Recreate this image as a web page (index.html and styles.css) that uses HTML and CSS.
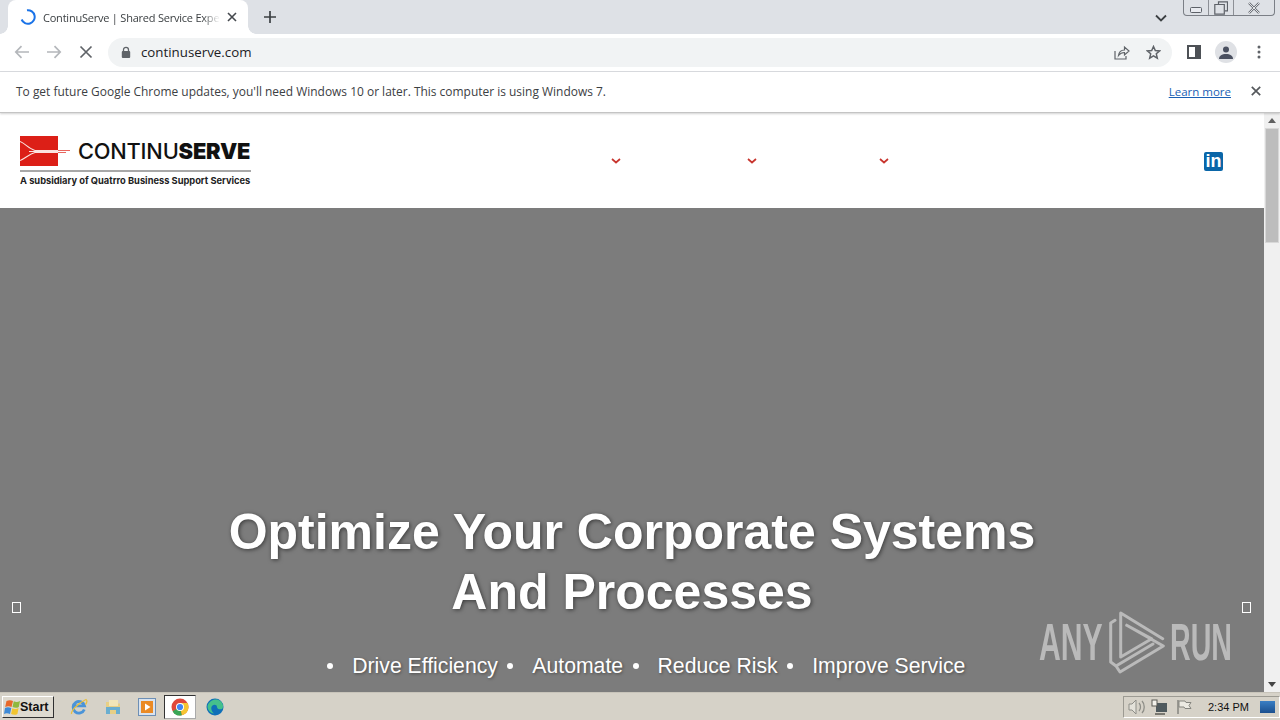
FILE: index.html
```html
<!DOCTYPE html>
<html lang="en">
<head>
<meta charset="utf-8">
<title>ContinuServe | Shared Service Experts</title>
<link rel="stylesheet" href="styles.css">
</head>
<body>
<div class="tabstrip">
  <div class="tab">
    <svg class="spinner" width="16" height="16" viewBox="0 0 16 16"><path d="M7 1.200A6.800 6.800 0 1 1 1.600 10.500" fill="none" stroke="#1a73e8" stroke-width="2"/></svg>
    <span class="tab-title">ContinuServe | Shared Service Expe</span>
    <svg class="tab-close" width="10" height="10" viewBox="0 0 10 10"><path d="M1 1l8 8M9 1l-8 8" stroke="#45494e" stroke-width="1.600"/></svg>
  </div>
  <svg class="newtab" width="12" height="12" viewBox="0 0 12 12"><path d="M6 0v12M0 6h12" stroke="#3c4043" stroke-width="1.700"/></svg>
  <div class="strip-spacer"></div>
  <svg class="tabs-menu" width="12" height="8" viewBox="0 0 12 8"><path d="M1 1.500l5 5 5-5" fill="none" stroke="#3c4043" stroke-width="1.800"/></svg>
  <div class="winctl">
    <div class="wc wc-min"><svg width="12" height="6" viewBox="0 0 12 6"><rect x=".5" y=".5" width="11" height="5" rx="1" fill="#e8eaef" stroke="#5d6168"/></svg></div>
    <div class="wc wc-max"><svg width="14" height="14" viewBox="0 0 14 14"><path d="M4.500 3V.8h9v9H11M.8 3.500h9.500v9.700H.8z" fill="none" stroke="#5d6168" stroke-width="1.200"/></svg></div>
    <div class="wc wc-close"><svg width="14" height="12" viewBox="0 0 14 12"><path d="M2 1l10 10M12 1L2 11" stroke="#6a6e74" stroke-width="2.400"/><path d="M2 1l10 10M12 1L2 11" stroke="#eef0f3" stroke-width=".9"/></svg></div>
  </div>
</div>

<div class="toolbar">
  <svg class="nav nav-back" width="16" height="14" viewBox="0 0 16 14"><path d="M15 7H2M7.500 1.200L1.800 7l5.700 5.800" fill="none" stroke="#b4b7bb" stroke-width="1.700"/></svg>
  <svg class="nav nav-fwd" width="16" height="14" viewBox="0 0 16 14"><path d="M1 7h13M8.500 1.200L14.200 7l-5.700 5.800" fill="none" stroke="#b4b7bb" stroke-width="1.700"/></svg>
  <svg class="nav nav-stop" width="14" height="14" viewBox="0 0 14 14"><path d="M1.500 1.500l11 11M12.500 1.500l-11 11" stroke="#5f6368" stroke-width="1.700"/></svg>
  <div class="omnibox">
    <svg width="10" height="13" viewBox="0 0 10 13"><path d="M2.500 5.500V3.800a2.500 2.500 0 0 1 5 0v1.700" fill="none" stroke="#5f6368" stroke-width="1.300"/><rect x=".8" y="5" width="8.400" height="7" rx="1" fill="#5f6368"/></svg>
    <span class="url">continuserve.com</span>
    <div class="strip-spacer"></div>
    <svg class="omni-share" width="16" height="15" viewBox="0 0 16 15"><path d="M1 6v8h11v-3" fill="none" stroke="#5f6368" stroke-width="1.200"/><path d="M4.500 10.500C5 6.800 7.500 5 10.500 5V2l4.500 4-4.500 4V7.500c-2.500 0-4.500 1-6 3z" fill="none" stroke="#5f6368" stroke-width="1.200"/></svg>
    <svg class="omni-star" width="15" height="15" viewBox="0 0 15 15"><path d="M7.500 1.500l1.800 4 4.300.4-3.300 2.900 1 4.300-3.800-2.300-3.800 2.300 1-4.300L1.400 5.900l4.300-.4z" fill="none" stroke="#5f6368" stroke-width="1.500"/></svg>
  </div>
  <svg class="side-icon" width="14" height="14" viewBox="0 0 14 14"><rect x="1" y="1" width="12" height="12" fill="none" stroke="#4d5156" stroke-width="2"/><rect x="8" y="1" width="5" height="12" fill="#4d5156"/></svg>
  <div class="avatar"><svg width="14" height="13" viewBox="0 0 14 13"><circle cx="7" cy="3.500" r="3" fill="#4a5060"/><path d="M0 13c0-3.500 3-5 7-5s7 1.500 7 5z" fill="#4a5060"/></svg></div>
  <svg class="menu-dots" width="4" height="14" viewBox="0 0 4 14"><circle cx="2" cy="2" r="1.500" fill="#5f6368"/><circle cx="2" cy="7" r="1.500" fill="#5f6368"/><circle cx="2" cy="12" r="1.500" fill="#5f6368"/></svg>
</div>

<div class="infobar">
  <span class="info-text">To get future Google Chrome updates, you'll need Windows 10 or later. This computer is using Windows 7.</span>
  <a class="learn" href="#">Learn more</a>
  <svg class="info-close" width="10" height="10" viewBox="0 0 10 10"><path d="M.8.800l8.400 8.400M9.200.800L.8 9.200" stroke="#55585c" stroke-width="1.700"/></svg>
</div>

<div class="viewport">
  <main class="page">
    <header class="site-header">
      <div class="logo">
        <div class="logo-top">
          <svg width="50" height="30" viewBox="0 0 50 30"><rect width="38" height="30" fill="#dc1f17"/><path d="M38 14.500h12M38 16.500h8" stroke="#e8675f" stroke-width="1"/><path d="M0 5.500C6 8 9 13 15 14.500h23M0 24.500C6 22 9 18 15 16.500h23M9 15.500h29" fill="none" stroke="#fbe3df" stroke-width="1.100"/></svg>
          <span class="logo-name">CONTINU<b>SERVE</b></span>
        </div>
        <div class="logo-sub">A subsidiary of Quatrro Business Support Services</div>
      </div>
      <nav class="site-nav">
        <svg class="chev c1" width="10" height="6" viewBox="0 0 10 6"><path d="M1 1l4 3.500L9 1" fill="none" stroke="#c8352e" stroke-width="1.700"/></svg>
        <svg class="chev c2" width="10" height="6" viewBox="0 0 10 6"><path d="M1 1l4 3.500L9 1" fill="none" stroke="#c8352e" stroke-width="1.700"/></svg>
        <svg class="chev c3" width="10" height="6" viewBox="0 0 10 6"><path d="M1 1l4 3.500L9 1" fill="none" stroke="#c8352e" stroke-width="1.700"/></svg>
      </nav>
      <div class="linkedin"><span>in</span></div>
    </header>
    <section class="hero">
      <h1>Optimize Your Corporate Systems<br>And Processes</h1>
      <ul class="points">
        <li>Drive Efficiency</li>
        <li>Automate</li>
        <li>Reduce Risk</li>
        <li>Improve Service</li>
      </ul>
      <span class="car car-l"></span>
      <span class="car car-r"></span>
      <div class="watermark">
        <span class="wm-text wm-any">ANY</span>
        <svg class="wm-logo" width="58" height="64" viewBox="0 0 58 64"><path d="M12.700 47V3l42 25.700M12.700 47l31-18.300-25-13.400M18.700 15.300L55.300 36 12 62l-4-6 37-22M7 10.300L2.700 13v39L8 56" fill="none" stroke="#bababa" stroke-width="3" stroke-linejoin="round" stroke-linecap="round"/></svg>
        <span class="wm-text wm-run">RUN</span>
      </div>
    </section>
  </main>
  <div class="scrollbar">
    <div class="sb-btn"><span class="tri-up"></span></div>
    <div class="sb-thumb"></div>
    <div class="strip-spacer"></div>
    <div class="sb-btn"><span class="tri-down"></span></div>
  </div>
</div>

<footer class="taskbar">
  <div class="start">
    <svg width="17" height="16" viewBox="0 0 17 16"><path d="M2.500 2C5 .8 7 1 9 2L7.500 8C5.500 7 3.500 7 1.200 8z" fill="#e8682a"/><path d="M9.800 2.300c2 1 4 1 6.200-.2L14.800 8c-2 1.200-4.200 1-6.300 0z" fill="#8fb83e"/><path d="M1 9c2-1.200 4.200-1 6.300 0L6 15c-2-1-4-1.200-6 0z" fill="#3f8ad6"/><path d="M8.300 9.300c2 1 4.200 1 6.300-.2L13.400 15c-2 1.200-4.300 1-6.300 0z" fill="#f2c530"/></svg>
    <span class="start-label">Start</span>
  </div>
  <div class="quick">
    <svg class="ql" width="18" height="18" viewBox="0 0 18 18"><path d="M14.300 11.500A5.800 5.800 0 1 1 14.500 7.800H4" fill="none" stroke="#4b94d8" stroke-width="2.800"/><path d="M1.500 16C1 14 6 6 16 1.500c1.500 1 1 3-.5 5" fill="none" stroke="#e9bf3d" stroke-width="1.300"/></svg>
    <svg class="ql" width="18" height="18" viewBox="0 0 18 18"><path d="M2 4h5l1 1.500h8V16H2z" fill="#e7cf86"/><rect x="5" y="2" width="9" height="6" fill="#f2e6b8"/><path d="M2 9h14v7h-4v-4H6v4H2z" fill="#6aaed0"/></svg>
    <svg class="ql" width="18" height="18" viewBox="0 0 18 18"><rect x=".5" y=".5" width="17" height="17" fill="#d9e3ef" stroke="#6d8fb5"/><rect x="3" y="3" width="12" height="12" fill="#ea8a25"/><path d="M7 5.500v7l5.500-3.500z" fill="#fff"/></svg>
    <div class="ql-active"><svg width="18" height="18" viewBox="0 0 18 18"><circle cx="9" cy="9" r="8.500" fill="#e0483a"/><path d="M9 9L1.600 13.200A8.500 8.500 0 0 0 11 17.300z" fill="#3aa655"/><path d="M9 5h7.500a8.500 8.500 0 0 1-5.500 12.300L9 9z" fill="#f7c531"/><circle cx="9" cy="9" r="4" fill="#fff"/><circle cx="9" cy="9" r="3.100" fill="#4285f4"/></svg></div>
    <svg class="ql ql-edge" width="18" height="18" viewBox="0 0 18 18"><circle cx="9" cy="9" r="8.500" fill="#0f6fb8"/><path d="M1.500 8C3 3 8 .5 12.500 2 16.500 3.500 18 8 16.500 10.500c-1.500 1.500-5.500 1-5.500-1.500C11 7 8.500 6 6.500 7.500 4.500 9 5 13 8 15.500 4 15 1.500 12 1.500 8z" fill="#45c08c"/></svg>
  </div>
  <div class="strip-spacer"></div>
  <div class="tray">
    <svg class="tray-sound" width="18" height="16" viewBox="0 0 18 16"><path d="M1 5h3l4-4v14l-4-4H1z" fill="#e4e2da" stroke="#8e8e88"/><path d="M11 4c2 2 2 6 0 8M14 2c3 3 3 9 0 12" fill="none" stroke="#8e8e88" stroke-width="1.300"/></svg>
    <svg class="tray-net" width="17" height="16" viewBox="0 0 17 16"><rect x="5" y="4" width="11" height="9" fill="#4f5a5e"/><rect x="1" y="1" width="5" height="6" fill="#f3f2ec" stroke="#5a5a55"/><path d="M4 15h10" stroke="#5a5a55" stroke-width="1.500"/></svg>
    <svg class="tray-flag" width="17" height="16" viewBox="0 0 17 16"><path d="M2 1v14" stroke="#85857f" stroke-width="1.500"/><path d="M3 2h6l1 1.500h5l-2 3 2 3H9L8 8H3z" fill="#eceae2" stroke="#85857f"/></svg>
    <span class="clock">2:34 PM</span>
    <div class="show-desktop"></div>
  </div>
</footer>
</body>
</html>
```
FILE: styles.css
```css
* { box-sizing: border-box; }
html, body { margin: 0; height: 720px; width: 1280px; overflow: hidden; }
body { display: flex; flex-direction: column; font-family: "Open Sans", "Noto Sans", sans-serif; background: #fff; color: #202124; }
.strip-spacer { flex: 1; }

.tabstrip { height: 34px; background: #dee1e6; display: flex; align-items: center; flex: none; }
.tab { width: 240px; height: 34px; margin-left: 8px; background: #fff; border-radius: 8px 8px 0 0; display: flex; align-items: center; padding: 0 11px 0 12px; position: relative; }
.tab::before, .tab::after { content: ""; position: absolute; bottom: 0; width: 8px; height: 8px; }
.tab::before { left: -8px; background: radial-gradient(circle at 0 0, #dee1e6 7.500px, #fff 8px); }
.tab::after { right: -8px; background: radial-gradient(circle at 100% 0, #dee1e6 7.500px, #fff 8px); }
.spinner { flex: none; }
.tab-title { flex: 1; margin-left: 7px; font-size: 11px; color: #3c4043; white-space: nowrap; letter-spacing: -.02em; -webkit-mask-image: linear-gradient(to right, #000 90%, transparent 100%); mask-image: linear-gradient(to right, #000 90%, transparent 100%); }
.tab-close { flex: none; margin-left: 7px; }
.newtab { margin-left: 16px; flex: none; }
.tabs-menu { margin-right: 16px; margin-top: 2px; flex: none; }
.winctl { align-self: flex-start; height: 16px; width: 92px; margin-right: 5px; display: flex; border: 1px solid #7b7f86; border-top: 0; border-radius: 0 0 4px 4px; flex: none; }
.wc { display: flex; align-items: center; justify-content: center; }
.wc-min { width: 25px; border-right: 1px solid #8d9096; padding-top: 4px; }
.wc-max { width: 25px; border-right: 1px solid #8d9096; }
.wc-close { flex: 1; }

.toolbar { height: 38px; flex: none; background: #fff; border-bottom: 1px solid #dadce0; display: flex; align-items: center; padding-bottom: 1px; }
.nav { flex: none; }
.nav-back { margin-left: 14px; }
.nav-fwd { margin-left: 16px; }
.nav-stop { margin-left: 17px; }
.omnibox { width: 1064px; height: 29px; margin-left: 15px; border-radius: 15px; background: #f1f3f4; display: flex; align-items: center; padding-left: 13px; flex: none; }
.url { margin-left: 10px; font-size: 13.300px; color: #202124; }
.omni-share { margin-right: 16px; }
.omni-star { margin-right: 11px; }
.side-icon { margin-left: 15px; flex: none; }
.avatar { width: 22px; height: 22px; margin-left: 14px; border-radius: 50%; background: #dfe1e5; display: flex; align-items: center; justify-content: center; flex: none; }
.menu-dots { margin-left: 20px; flex: none; }

.infobar { height: 41px; flex: none; background: #fff; display: flex; align-items: center; padding: 0 19px 2px 16px; border-bottom: 1px solid #c4c4c4; box-shadow: 0 1px 2px rgba(0,0,0,.18); position: relative; z-index: 1; }
.info-text { flex: 1; font-size: 11.960px; color: #3c4043; }
.learn { font-size: 11.500px; color: #1a5fb4; }
.info-close { margin-left: 20px; flex: none; }

.viewport { flex: 1; min-height: 0; display: flex; }
.page { flex: 1; min-width: 0; display: flex; flex-direction: column; }
.site-header { height: 95px; flex: none; background: #fff; display: flex; align-items: flex-start; padding: 23px 0 0 20px; }
.logo { width: 231px; flex: none; }
.logo-top { display: flex; align-items: center; height: 30px; }
.logo-name { font-family: Inter, sans-serif; font-size: 21.800px; font-weight: 500; color: #111; margin-left: 8px; letter-spacing: -.2px; white-space: nowrap; }
.logo-name b { font-weight: 900; }
.logo-sub { margin-top: 4px; border-top: 2px solid #a8a8a8; padding-top: 3px; font-family: Inter, sans-serif; font-size: 9.300px; line-height: 11px; font-weight: 700; color: #222; white-space: nowrap; }
.site-nav { flex: 1; display: flex; padding-top: 22px; }
.chev { flex: none; }
.c1 { margin-left: 360px; }
.c2 { margin-left: 126px; }
.c3 { margin-left: 122px; }
.linkedin { width: 19px; height: 19px; margin: 16px 41px 0 0; background: #0a66a8; border-radius: 2px; color: #fff; font: 700 18px/19px "Liberation Sans", sans-serif; text-align: center; flex: none; }

.hero { flex: 1; min-height: 0; background: #7c7c7c; position: relative; display: flex; flex-direction: column; align-items: center; padding-top: 294px; overflow: hidden; }
h1 { margin: 0; width: 100%; text-align: center; font: 700 50px/60px "Liberation Sans", Arial, sans-serif; color: #fff; text-shadow: 1px 1px 4px rgba(0,0,0,.55); }
.points { list-style: none; margin: 29px 0 0; padding: 0 0 0 19px; display: flex; font: 21.200px/30px "Liberation Sans", Arial, sans-serif; color: #fff; text-shadow: 1px 1px 3px rgba(0,0,0,.4); }
.points li { margin-left: 34.500px; position: relative; }
.points li::before { content: ""; position: absolute; left: -25px; top: 12px; width: 6px; height: 6px; border-radius: 50%; background: #fff; }
.car { position: absolute; top: 394px; width: 9px; height: 11px; border: 1px solid #fff; }
.car-l { left: 12px; }
.car-r { right: 13px; }
.watermark { position: absolute; left: 1039px; top: 402px; height: 64px; display: flex; align-items: center; }
.wm-text { font: 700 52px/64px "Liberation Sans", sans-serif; color: #bababa; display: inline-block; transform-origin: 0 50%; flex: none; }
.wm-any { width: 69px; transform: scaleX(.58); }
.wm-run { width: 62px; margin-left: 4px; transform: scaleX(.55); }
.wm-logo { flex: none; }

.scrollbar { width: 16px; flex: none; background: #f0f0f0; display: flex; flex-direction: column; }
.sb-btn { height: 15px; display: flex; align-items: center; justify-content: center; flex: none; }
.tri-up { border: 4px solid transparent; border-top: 0; border-bottom: 5px solid #606060; }
.tri-down { border: 4px solid transparent; border-bottom: 0; border-top: 5px solid #444; }
.sb-thumb { height: 115px; margin: 0 1px; background: #bdbdbd; border: 1px solid #d8d8d8; flex: none; }

.taskbar { height: 28px; flex: none; background: #d6d2c8; border-top: 1px solid #c8c4ba; display: flex; align-items: center; }
.start { width: 52px; height: 22px; margin-left: 2px; background: #dedad0; border: 1px solid; border-color: #fff #303030 #303030 #fff; display: flex; align-items: center; padding-left: 1px; font: 700 12.500px "Liberation Sans", sans-serif; color: #111; flex: none; }
.start-label { margin-left: -1px; }
.quick { display: flex; align-items: center; margin-left: 16px; flex: none; }
.ql { margin-right: 16px; flex: none; }
.ql-active { width: 32px; height: 24px; margin: 0 10px 0 -8px; background: #fff; border: 1px solid; border-color: #333 #aaa #aaa #333; display: flex; align-items: center; justify-content: center; }
.ql-edge { margin-right: 0; }
.tray { width: 157px; height: 22px; border: 1px solid; border-color: #9c9a92 #fff #fff #9c9a92; display: flex; align-items: center; padding-left: 4px; flex: none; }
.tray svg { flex: none; }
.tray-net { margin-left: 5px; }
.tray-flag { margin-left: 8px; }
.clock { margin-left: 15px; font: 11px "Liberation Sans", sans-serif; color: #111; white-space: nowrap; }
.show-desktop { width: 15px; height: 12px; margin-left: 11px; background: linear-gradient(#3a7fc4, #1b4f8e); flex: none; }
```
